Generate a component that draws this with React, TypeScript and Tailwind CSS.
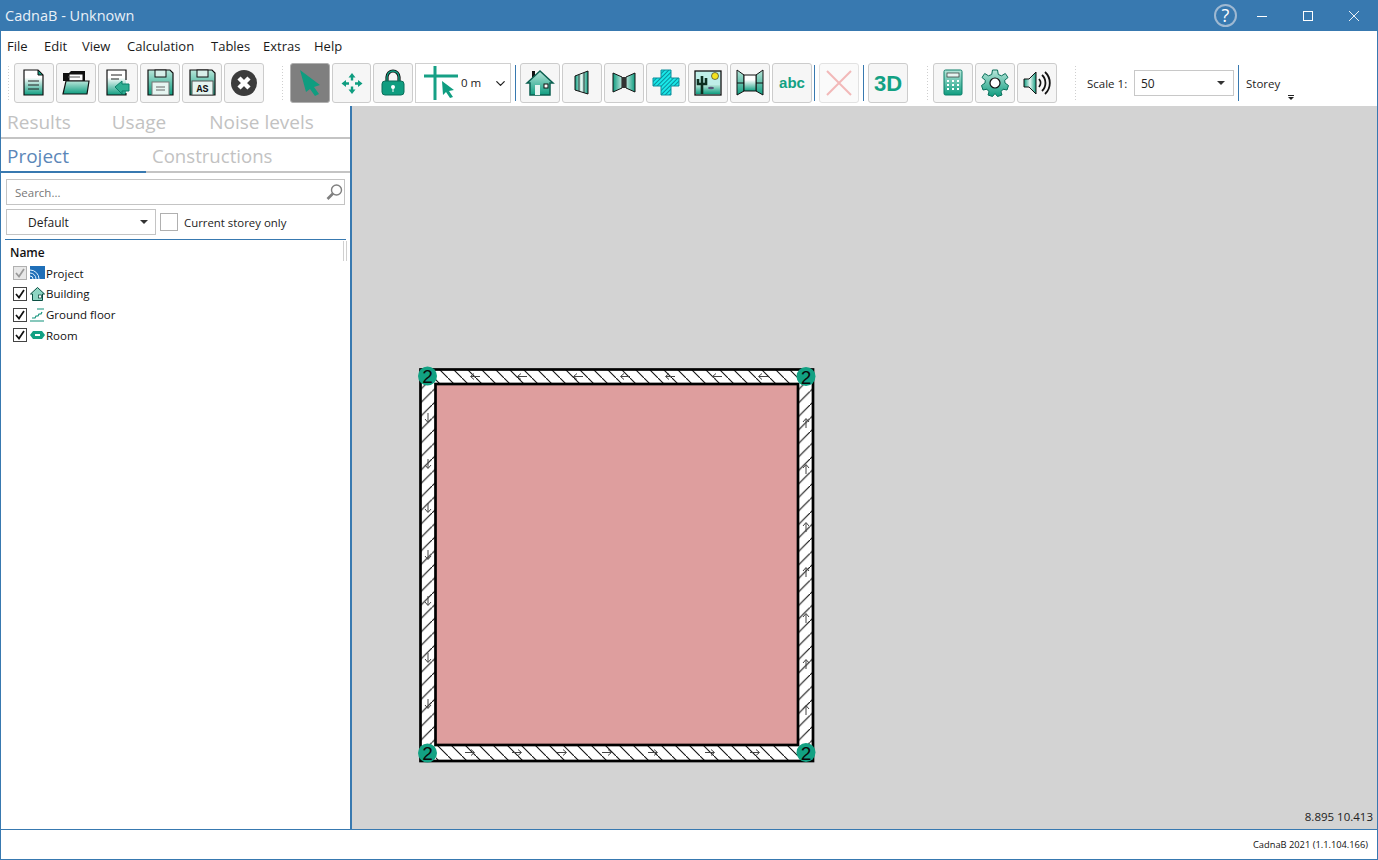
import type { ReactNode } from 'react'
import { ChevronDown } from 'lucide-react'

function Btn({ children, active, narrow, faded }: { children: ReactNode; active?: boolean; narrow?: boolean; faded?: boolean }) {
  return (
    <div
      className={`flex h-10 shrink-0 items-center justify-center rounded-[3px] border ${narrow ? 'w-[39px]' : 'w-10'} ${
        active ? 'border-[#b0b0b0] bg-[#7f7f7f]' : faded ? 'border-[#e2e2e2] bg-[#fafafa]' : 'border-[#cccccc] bg-[#f6f6f6]'
      }`}
    >
      {children}
    </div>
  )
}

function Grip() {
  return <div className="h-9 w-[4px] shrink-0 bg-[radial-gradient(#cfcfcf_1px,transparent_1px)] bg-[length:3px_3px]" />
}

function Sep() {
  return <div className="h-9 w-px shrink-0 bg-[#3879b0]" />
}

function Svg({ children, size = 32 }: { children: ReactNode; size?: number }) {
  return (
    <svg width={size} height={size} viewBox="0 0 32 32">
      <defs>
        <linearGradient id="tealV" x1="0" y1="0" x2="0" y2="1">
          <stop offset="0.3" stopColor="#ffffff" />
          <stop offset="1" stopColor="#0f9d80" />
        </linearGradient>
        <linearGradient id="mintV" x1="0" y1="0" x2="0" y2="1">
          <stop offset="0" stopColor="#b9e6da" />
          <stop offset="1" stopColor="#0f9d80" />
        </linearGradient>
        <linearGradient id="tealH" x1="0" y1="0" x2="1" y2="0">
          <stop offset="0" stopColor="#0f9d80" />
          <stop offset="0.5" stopColor="#e6f5f1" />
          <stop offset="1" stopColor="#0f9d80" />
        </linearGradient>
        <pattern id="cyanHatch" width="3" height="3" patternUnits="userSpaceOnUse" patternTransform="rotate(45)">
          <rect width="3" height="3" fill="#19e9e9" />
          <rect width="1" height="3" fill="#0a8f9c" />
        </pattern>
      </defs>
      {children}
    </svg>
  )
}

function Arrow({ x, y, dir }: { x: number; y: number; dir: 'l' | 'r' | 'u' | 'd' }) {
  const rot = { r: 0, d: 90, l: 180, u: 270 }[dir]
  return (
    <g transform={`translate(${x} ${y}) rotate(${rot})`} stroke="#444" strokeWidth="1" fill="none">
      <path d="M-5 0H4M1-3L4.500 0L1 3" />
    </g>
  )
}

function Corner({ x, y }: { x: number; y: number }) {
  return (
    <g>
      <circle cx={x} cy={y} r="9.500" fill="#12a183" />
      <text x={x} y={y + 7} textAnchor="middle" fontSize="19" fontFamily="'Liberation Sans', sans-serif" fill="#0a0a0a">
        2
      </text>
    </g>
  )
}

function Floorplan() {
  return (
    <svg width="406" height="404" viewBox="415 364 406 404" className="absolute left-[63px] top-[258px]">
      <defs>
        <pattern id="back" width="14" height="14" patternUnits="userSpaceOnUse">
          <path d="M-1 -1L15 15" stroke="#111" strokeWidth="1.100" />
        </pattern>
        <pattern id="forward" width="13.500" height="13.500" patternUnits="userSpaceOnUse">
          <path d="M-1 14.500L14.500 -1" stroke="#111" strokeWidth="1.100" />
        </pattern>
      </defs>
      <rect x="420" y="369" width="394" height="392" fill="#fff" />
      <rect x="436" y="369" width="362" height="16" fill="url(#back)" />
      <rect x="436" y="745" width="362" height="16" fill="url(#back)" />
      <rect x="420" y="384" width="16" height="361" fill="url(#forward)" />
      <rect x="798" y="384" width="16" height="361" fill="url(#forward)" />
      {[475, 522, 578, 625, 670, 717, 763].map((x) => (
        <Arrow key={x} x={x} y={376.5} dir="l" />
      ))}
      {[470, 517, 562, 607, 653, 710, 755].map((x) => (
        <Arrow key={x} x={x} y={752.5} dir="r" />
      ))}
      {[418, 464, 508, 555, 601, 658, 704].map((y) => (
        <Arrow key={y} x={428} y={y} dir="d" />
      ))}
      {[423, 469, 527, 572, 618, 664, 710].map((y) => (
        <Arrow key={y} x={806} y={y} dir="u" />
      ))}
      <rect x="420.500" y="369.500" width="392.500" height="391.500" fill="none" stroke="#000" strokeWidth="2.700" />
      <rect x="435.500" y="384" width="362.500" height="361" fill="#de9e9e" stroke="#000" strokeWidth="2.700" />
      <Corner x={427.5} y={376} />
      <Corner x={806} y={376.5} />
      <Corner x={427.5} y={753} />
      <Corner x={806} y={752.5} />
    </svg>
  )
}

const treeItems = [
  { label: 'Project', muted: true, icon: 'project' },
  { label: 'Building', icon: 'building' },
  { label: 'Ground floor', icon: 'floor' },
  { label: 'Room', icon: 'room' },
]

const menuItems = [
  { label: 'File', width: 'w-[37px]' },
  { label: 'Edit', width: 'w-[38px]' },
  { label: 'View', width: 'w-[45px]' },
  { label: 'Calculation', width: 'w-[84px]' },
  { label: 'Tables', width: 'w-[52px]' },
  { label: 'Extras', width: 'w-[51px]' },
  { label: 'Help', width: 'w-[40px]' },
]

function TreeIcon({ name }: { name: string }) {
  return (
    <svg width="15" height="14" viewBox="0 0 15 14" className="shrink-0">
      {name === 'project' && (
        <>
          <rect x="0" y="0" width="15" height="13" fill="#1f6fb8" />
          <path d="M0 4A9 9 0 0 1 9 13M0 7A6 6 0 0 1 6 13M0 10A3 3 0 0 1 3 13" fill="none" stroke="#dff1ff" />
        </>
      )}
      {name === 'building' && (
        <>
          <path d="M7.500 0.500L14.500 7H12.500V13.500H2.500V7H0.500Z" fill="#8fd6c3" stroke="#0b4f42" />
          <rect x="8.500" y="8" width="3" height="3" fill="#fff" stroke="#0b3f35" strokeWidth="0.7" />
        </>
      )}
      {name === 'floor' && (
        <path d="M0 13H14M7 1H14M2 10H5L6 8H8L9 6H11L12 4" fill="none" stroke="#11917a" strokeWidth="1.200" />
      )}
      {name === 'room' && (
        <path d="M0 7L3 3H12L15 7L12 11H3Z M5 6H10V8H5Z" fill="#12a183" fillRule="evenodd" />
      )}
    </svg>
  )
}

function Sidebar() {
  return (
    <aside className="flex w-[351px] shrink-0 flex-col border-r-2 border-[#3879b0] bg-white">
      <div className="flex h-[33px] items-center border-b-2 border-[#c4c4c4] pt-[1px] text-[19px] text-[#c2c2c2]">
        <span className="ml-[6px]">Results</span>
        <span className="ml-[41px]">Usage</span>
        <span className="ml-[43px]">Noise levels</span>
      </div>
      <div className="relative flex h-[34px] items-center border-b-2 border-[#c4c4c4] pt-[1px] text-[#c2c2c2]">
        <span className="ml-[6px] mt-[1px] text-[19px] text-[#5b86b8]">Project</span>
        <span className="ml-[83px] text-[18.6px]">Constructions</span>
        <div className="absolute -bottom-[2px] left-0 h-[2px] w-[145px] bg-[#3879b0]" />
      </div>
      <div className="mx-[5px] mt-[6px] flex h-[26px] items-center justify-between border border-[#c4c4c4] pl-2 pr-[1px] text-[11.5px] text-[#777777]">
        <span className="mt-[1px]">Search...</span>
        <svg width="17" height="16" viewBox="0 0 17 16">
          <circle cx="10.500" cy="6" r="5" fill="none" stroke="#808080" strokeWidth="1.400" />
          <path d="M7 9.500L1.500 15" stroke="#808080" strokeWidth="2.600" />
        </svg>
      </div>
      <div className="mx-[5px] mt-[4px] flex items-center">
        <div className="relative flex h-[26px] w-[150px] items-center border border-[#c4c4c4] pl-[21px] text-[12px] text-[#222222]">
          <span className="mt-[1px]">Default</span>
          <div className="absolute right-[7px] top-[10px] h-0 w-0 border-x-[4px] border-t-[4px] border-x-transparent border-t-[#333333]" />
        </div>
        <div className="ml-1 h-[18px] w-[18px] border border-[#b0b0b0]" />
        <span className="ml-[6px] mt-[1px] text-[11.4px] text-[#222222]">Current storey only</span>
      </div>
      <div className="mx-1 mt-1 h-px bg-[#3879b0]" />
      <div className="relative mt-[1px] flex h-[24px] items-center pl-[9px] text-[12px] font-semibold text-[#111111]">
        Name
        <div className="absolute right-[3px] top-[0px] h-[20px] w-[4px] border-x border-[#d0d0d0]" />
      </div>
      <ul className="-mt-[2px] flex flex-col">
        {treeItems.map((item) => (
          <li key={item.label} className="flex h-[20.7px] items-center pl-[12px] text-[11.5px] text-[#111111]">
            <div
              className={`flex h-[14px] w-[14px] items-center justify-center border ${
                item.muted ? 'border-[#b0b0b0] bg-[#e8e8e8]' : 'border-[#444444] bg-white'
              }`}
            >
              <svg width="10" height="10" viewBox="0 0 10 10">
                <path d="M1 5L4 8.500L9 1" fill="none" stroke={item.muted ? '#999999' : '#111111'} strokeWidth="1.700" />
              </svg>
            </div>
            <span className="ml-[3px] flex items-center gap-[1px]">
              <TreeIcon name={item.icon} />
              {item.label}
            </span>
          </li>
        ))}
      </ul>
    </aside>
  )
}

export default function App() {
  return (
    <div className="flex h-[860px] w-[1378px] flex-col overflow-hidden border-x border-b border-[#3879b0] bg-white font-['Open_Sans',sans-serif]">
      {/* Title bar */}
      <header className="-mx-px flex h-[31px] shrink-0 items-center bg-[#3879b0] text-white">
        <span className="ml-[5px] text-[14.5px] text-[#e8f0f7]">CadnaB - Unknown</span>
        <div className="ml-auto flex items-center">
          <div className="mr-[20px] flex h-[23px] w-[23px] items-center justify-center rounded-full border-2 border-[#9fb9d2] text-[18px] text-white">?</div>
          <svg width="10" height="10" viewBox="0 0 10 10" className="mr-[36px]">
            <path d="M0 5.500H10" stroke="#fff" />
          </svg>
          <svg width="10" height="10" viewBox="0 0 10 10" className="mr-[36px]">
            <rect x="0.500" y="0.500" width="9" height="9" fill="none" stroke="#fff" />
          </svg>
          <svg width="10" height="10" viewBox="0 0 10 10" className="mr-[19px]">
            <path d="M0 0L10 10M10 0L0 10" stroke="#fff" strokeWidth="0.9" />
          </svg>
        </div>
      </header>

      {/* Menu */}
      <nav className="flex h-[29px] shrink-0 items-center pl-[6px] pt-[2px] text-[13px] text-[#1a1a1a]">
        {menuItems.map((m) => (
          <span key={m.label} className={m.width}>{m.label}</span>
        ))}
      </nav>

      {/* Toolbar */}
      <div className="flex h-[46px] shrink-0 items-center">
        <div className="ml-[6px] mr-[3px]"><Grip /></div>
        <div className="flex gap-[2px]">
          <Btn>
            <Svg>
              <path d="M6 3H20L25 8V28H6Z" fill="url(#tealV)" stroke="#111" strokeWidth="1.200" />
              <path d="M20 3V8H25Z" fill="#0f9d80" stroke="#111" />
              <path d="M10 14H21M10 18H21M10 22H21" stroke="#222" />
            </Svg>
          </Btn>
          <Btn>
            <Svg>
              <path d="M3 6H9L11 4H25V14H3Z" fill="#111" />
              <rect x="9" y="7" width="14" height="7" fill="#fff" stroke="#111" />
              <path d="M8 10H20" stroke="#555" />
              <path d="M3 27L6 14H29L27 27Z" fill="url(#mintV)" stroke="#111" strokeWidth="1.200" />
            </Svg>
          </Btn>
          <Btn>
            <Svg>
              <path d="M5 3H24V28H5Z" fill="url(#tealV)" />
              <path d="M24 13V3H5V28H24V26" fill="none" stroke="#111" strokeWidth="1.200" />
              <path d="M9 8H20M9 12H17" stroke="#222" />
              <path d="M13 20L20 14V17H27V24H20V27Z" fill="#2fae92" stroke="#0a7f68" />
            </Svg>
          </Btn>
          <Btn>
            <Svg>
              <path d="M4 3H26L29 6V28H4Z" fill="url(#mintV)" stroke="#111" strokeWidth="1.200" />
              <rect x="11" y="3" width="11" height="7" fill="#d7efe9" stroke="#111" />
              <rect x="8" y="15" width="17" height="13" fill="#e6f5f1" stroke="#777" />
              <path d="M12 20H21M12 23H21" stroke="#666" />
            </Svg>
          </Btn>
          <Btn>
            <Svg>
              <path d="M4 3H26L29 6V28H4Z" fill="url(#mintV)" stroke="#111" strokeWidth="1.200" />
              <rect x="11" y="3" width="11" height="7" fill="#d7efe9" stroke="#111" />
              <rect x="6" y="14" width="21" height="14" fill="#e6f5f1" stroke="#555" />
              <text x="16.500" y="25" textAnchor="middle" fontSize="10" fontWeight="700" fontFamily="'Liberation Mono', monospace" fill="#111">AS</text>
            </Svg>
          </Btn>
          <Btn>
            <Svg>
              <circle cx="16" cy="16" r="13" fill="#3c3c3c" />
              <path d="M11 11L21 21M21 11L11 21" stroke="#fff" strokeWidth="4.500" />
            </Svg>
          </Btn>
        </div>
        <div className="ml-[17px] mr-[5px]"><Grip /></div>
        <div className="flex gap-[2px]">
          <Btn active>
            <Svg>
              <path d="M6 3L26 18L20 20L25 27L21 29L16 22L12 25Z" fill="#0f9d80" />
            </Svg>
          </Btn>
          <Btn narrow>
            <Svg>
              <path d="M16 6L19.500 10.500H17.200V13.500H14.800V10.500H12.500Z M16 27L12.500 22.500H14.800V19.500H17.200V22.500H19.500Z M5.500 16.500L10 13V15.300H13V17.700H10V20Z M26.500 16.500L22 20V17.700H19V15.300H22V13Z" fill="#0f9d80" />
            </Svg>
          </Btn>
          <Btn>
            <Svg>
              <path d="M10 15V10A6 6 0 0 1 22 10V15" fill="none" stroke="#111" strokeWidth="3.200" />
              <path d="M10 15V10A6 6 0 0 1 22 10V15" fill="none" stroke="#0f9d80" strokeWidth="1.400" />
              <rect x="5" y="14" width="22" height="14" rx="3" fill="#0f9d80" stroke="#0a6f5a" />
              <circle cx="16" cy="20" r="2" fill="#fff" />
              <path d="M16 20V25" stroke="#fff" />
            </Svg>
          </Btn>
          <div className="flex h-10 w-[96px] shrink-0 items-center border border-[#d0d0d0] bg-white pl-2">
            <svg width="36" height="34" viewBox="0 0 36 34" className="shrink-0">
              <path d="M0 10H34M11 0V34" stroke="#16a085" strokeWidth="3" fill="none" />
              <path d="M18 15L30 24L25 25L29 31L26 32L22 26L19 29Z" fill="#0f9d80" />
            </svg>
            <span className="ml-[1px] text-[11.5px] text-[#222222]">0 m</span>
            <ChevronDown size={15} strokeWidth={2} className="ml-auto mr-[2px] text-[#222222]" />
          </div>
        </div>
        <div className="ml-[4px] mr-[4px]"><Sep /></div>
        <div className="flex gap-[2px]">
          <Btn>
            <Svg>
              <rect x="8" y="4" width="3" height="7" fill="#111" />
              <path d="M3 16L16 4L29 16H26V28H6V16Z" fill="url(#mintV)" stroke="#0b5f50" strokeWidth="1.500" />
              <rect x="11" y="18" width="5" height="10" fill="#e6f5f1" />
              <rect x="20" y="17" width="4" height="4" fill="#fff" stroke="#111" />
            </Svg>
          </Btn>
          <Btn>
            <Svg>
              <path d="M9 9L22 4V27L9 23Z" fill="url(#tealH)" stroke="#111" />
              <path d="M13 8V24M18 6V26" stroke="#111" strokeWidth="0.8" />
            </Svg>
          </Btn>
          <Btn>
            <Svg>
              <path d="M5 6L14 10V21L5 25Z M27 6L18 10V21L27 25Z" fill="url(#tealH)" stroke="#111" />
              <rect x="14" y="10" width="4" height="11" fill="#333" />
            </Svg>
          </Btn>
          <Btn>
            <Svg>
              <path d="M11 3H21V11H29V19H21V28H11V19H3V11H11Z" fill="url(#cyanHatch)" stroke="#0a8f9c" />
            </Svg>
          </Btn>
          <Btn>
            <Svg>
              <rect x="3" y="4" width="26" height="24" fill="#bfeee8" stroke="#111" strokeWidth="1.300" />
              <rect x="4" y="18" width="24" height="9" fill="url(#mintV)" />
              <path d="M10 27V9M6 12V17H14V11" fill="none" stroke="#0d2f20" strokeWidth="2.600" />
              <ellipse cx="19" cy="21" rx="3" ry="1.200" fill="#557" />
              <circle cx="23" cy="9" r="3.500" fill="#f4e21f" stroke="#222" strokeWidth="0.6" />
            </Svg>
          </Btn>
          <Btn>
            <Svg>
              <path d="M3 3L10 8V24L3 28Z M29 3L22 8V24L29 28Z" fill="url(#mintV)" stroke="#111" />
              <rect x="10" y="8" width="12" height="16" fill="url(#tealV)" stroke="#111" />
              <path d="M3 16H10M22 16H29" stroke="#111" />
            </Svg>
          </Btn>
          <Btn>
            <span className="font-['Liberation_Sans',sans-serif] text-[15px] font-bold text-[#12a183]">abc</span>
          </Btn>
        </div>
        <div className="ml-[2px] mr-[4px]"><Sep /></div>
        <Btn faded>
          <svg width="26" height="26" viewBox="0 0 26 26">
            <path d="M1 1L25 25M25 1L1 25" stroke="#f2b8b8" strokeWidth="2" />
          </svg>
        </Btn>
        <div className="mx-[4px]"><Sep /></div>
        <Btn>
          <span className="font-['Liberation_Sans',sans-serif] text-[22px] font-bold text-[#12a183]">3D</span>
        </Btn>
        <div className="ml-[18px] mr-[3px]"><Grip /></div>
        <div className="flex gap-[2px]">
          <Btn>
            <Svg>
              <rect x="7" y="3" width="18" height="25" rx="1.500" fill="url(#mintV)" stroke="#0a7f68" />
              <rect x="10" y="6" width="12" height="4" fill="#e6f5f1" stroke="#333" strokeWidth="0.7" />
              <path d="M10 14H12M15 14H17M20 14H22M10 18H12M15 18H17M20 18H22M10 22H12M15 22H17M20 22H22" stroke="#fff" strokeWidth="2" />
            </Svg>
          </Btn>
          <Btn>
            <Svg>
              <path d="M13.500 3H18.500L19.300 7.500L22.500 8.800L26.300 6.500L29 10.500L25.700 13.300L26 16L29.500 18.500L28 23L24 22.200L22 24.800L23 28L18.500 29.500L16 26.500L13.500 29.500L9 28L10 24.800L8 22.200L4 23L2.500 18.500L6 16L6.300 13.300L3 10.500L5.700 6.500L9.500 8.800L12.700 7.500Z" fill="url(#mintV)" stroke="#0a6f5a" />
              <circle cx="16" cy="16" r="5" fill="#fff" stroke="#111" strokeWidth="1.200" />
            </Svg>
          </Btn>
          <Btn>
            <Svg>
              <path d="M3 12H8L15 5V27L8 20H3Z" fill="url(#tealH)" stroke="#111" />
              <path d="M18 12A6 6 0 0 1 18 20M21 8A11 11 0 0 1 21 24M24 5A15 15 0 0 1 24 27" fill="none" stroke="#111" strokeWidth="1.800" />
            </Svg>
          </Btn>
        </div>
        <div className="ml-[17px]"><Grip /></div>
        <span className="ml-[9px] mt-[1px] w-[47px] shrink-0 text-[11.5px] text-[#222222]">Scale 1:</span>
        <div className="relative flex h-[26px] w-[100px] shrink-0 items-center border border-[#c8c8c8] pl-[6px] text-[12px] text-[#222222]">
          <span className="mt-[1px]">50</span>
          <div className="absolute right-[8px] top-[10px] h-0 w-0 border-x-[4px] border-t-[4px] border-x-transparent border-t-[#333333]" />
        </div>
        <div className="ml-[4px]"><Sep /></div>
        <div className="relative ml-[7px] mt-[2px] w-[60px] text-[11.5px] text-[#222222]">
          Storey
          <div className="absolute left-[42px] top-[20px] h-px w-[6px] bg-[#222222]" />
          <div className="absolute left-[42px] top-[22px] h-0 w-0 border-x-[3px] border-t-[3px] border-x-transparent border-t-[#222222]" />
        </div>
      </div>

      {/* Main */}
      <div className="flex min-h-0 flex-1">
        <Sidebar />
        <main className="relative flex-1 bg-[#d3d3d3]">
          <Floorplan />
          <span className="absolute bottom-[4px] right-[4px] text-[11.5px] text-[#222222]">8.895 10.413</span>
        </main>
      </div>

      {/* Status bar */}
      <footer className="flex h-[30px] shrink-0 items-center justify-end border-t border-[#3879b0] pr-[9px] text-[9.300px] text-[#111111]">
        CadnaB 2021 (1.1.104.166)
      </footer>
    </div>
  )
}
